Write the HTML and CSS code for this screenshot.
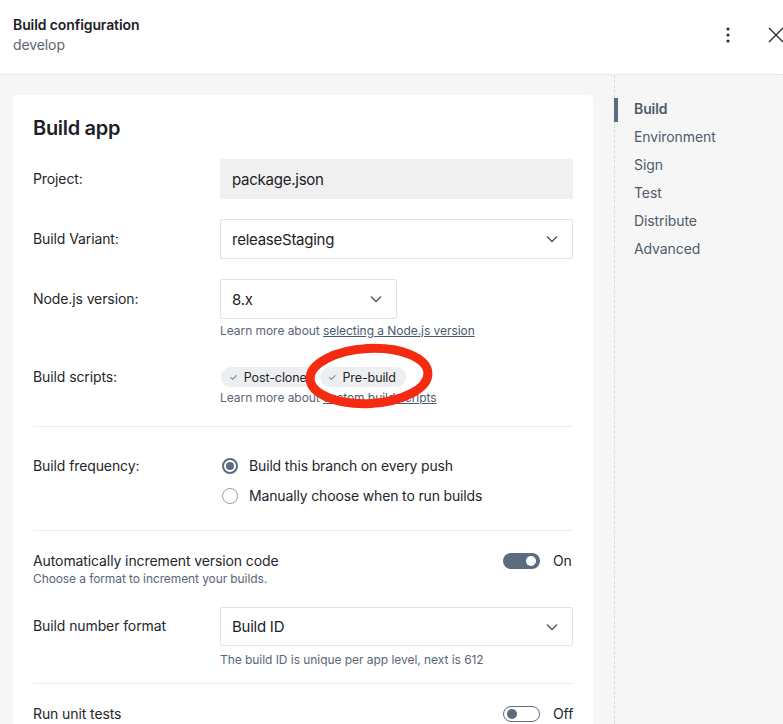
FILE: index.html
```html
<!DOCTYPE html>
<html>
<head>
<meta charset="utf-8">
<link rel="stylesheet" href="styles.css">
</head>
<body>
<header class="topbar">
  <div class="titles">
    <div class="title">Build configuration</div>
    <div class="subtitle">develop</div>
  </div>
  <div class="actions">
    <svg class="kebab" width="4" height="16" viewBox="0 0 4 16"><circle cx="2" cy="2" r="1.6"/><circle cx="2" cy="8" r="1.6"/><circle cx="2" cy="14" r="1.6"/></svg>
    <svg class="close" width="16" height="16" viewBox="0 0 16 16"><path d="M1 1L15 15M15 1L1 15"/></svg>
  </div>
</header>
<div class="layout">
  <main class="main">
    <section class="card">
      <h2 class="card-title">Build app</h2>

      <div class="row r-project">
        <div class="label">Project:</div>
        <div class="field"><div class="input readonly">package.json</div></div>
      </div>

      <div class="row r-variant">
        <div class="label">Build Variant:</div>
        <div class="field"><div class="input select">releaseStaging<svg class="chev" width="12" height="8" viewBox="0 0 12 8"><path d="M1 1.5L6 6.5L11 1.5"/></svg></div></div>
      </div>

      <div class="row r-node top">
        <div class="label lbl-input">Node.js version:</div>
        <div class="field">
          <div class="input select small">8.x<svg class="chev" width="12" height="8" viewBox="0 0 12 8"><path d="M1 1.5L6 6.5L11 1.5"/></svg></div>
          <div class="help">Learn more about <a>selecting a Node.js version</a></div>
        </div>
      </div>

      <div class="row r-scripts top">
        <div class="label lbl-chips">Build scripts:</div>
        <div class="field">
          <div class="chips">
            <span class="chip"><span class="tick">✓</span>Post-clone</span>
            <span class="chip"><span class="tick">✓</span>Pre-build</span>
          </div>
          <div class="help">Learn more about <a>custom build scripts</a></div>
        </div>
      </div>

      <div class="divider"></div>

      <div class="row r-freq top">
        <div class="label lbl-radio">Build frequency:</div>
        <div class="field radios">
          <div class="radio-row"><span class="radio checked"></span>Build this branch on every push</div>
          <div class="radio-row"><span class="radio"></span>Manually choose when to run builds</div>
        </div>
      </div>

      <div class="divider d2"></div>

      <div class="row r-auto top">
        <div class="stack">
          <div class="label wide">Automatically increment version code</div>
          <div class="sub">Choose a format to increment your builds.</div>
        </div>
        <div class="toggle-group">
          <span class="toggle on"><span class="knob"></span></span>
          <span class="toggle-label">On</span>
        </div>
      </div>

      <div class="row r-format top">
        <div class="label lbl-input">Build number format</div>
        <div class="field">
          <div class="input select">Build ID<svg class="chev" width="12" height="8" viewBox="0 0 12 8"><path d="M1 1.5L6 6.5L11 1.5"/></svg></div>
          <div class="help h2">The build ID is unique per app level, next is 612</div>
        </div>
      </div>

      <div class="divider d3"></div>

      <div class="row r-tests">
        <div class="label grow">Run unit tests</div>
        <div class="toggle-group">
          <span class="toggle off"><span class="knob"></span></span>
          <span class="toggle-label">Off</span>
        </div>
      </div>
    </section>
  </main>
  <nav class="sidenav">
    <div class="nav-item active">Build</div>
    <div class="nav-item">Environment</div>
    <div class="nav-item">Sign</div>
    <div class="nav-item">Test</div>
    <div class="nav-item">Distribute</div>
    <div class="nav-item">Advanced</div>
  </nav>
</div>
<svg class="annotation" width="150" height="90" viewBox="0 0 150 90">
  <ellipse cx="75" cy="45" rx="59" ry="27.5" transform="rotate(-3 75 45)"/>
</svg>
</body>
</html>
```

FILE: styles.css
```css
* { box-sizing: border-box; }
html, body { margin: 0; padding: 0; }
body {
  width: 783px;
  height: 724px;
  overflow: hidden;
  font-family: Inter, "Noto Sans", sans-serif;
  color: #23272b;
  background: #f6f6f6;
  position: relative;
  letter-spacing: -0.1px;
}
.topbar {
  height: 75px;
  background: #fff;
  border-bottom: 1px dotted #d6d6d6;
  display: flex;
  justify-content: space-between;
  padding: 15px 0 0 13px;
}
.title { font-size: 14px; font-weight: 600; line-height: 20px; letter-spacing: -0.1px; color: #1d2124; }
.subtitle { font-size: 14px; line-height: 20px; color: #5a6676; margin-top: 0px; }
.actions { display: flex; align-items: center; height: 40px; }
.kebab { fill: #2a2d31; margin-right: 38px; }
.close { stroke: #2a2d31; stroke-width: 1.4; fill: none; margin-right: -1px; }

.layout { display: flex; height: 649px; }
.main { width: 614px; padding: 20px 21px 0 13px; }
.card {
  background: #fff;
  border-radius: 5px;
  padding: 20px 20px 0 20px;
  height: 640px;
}
.card-title { margin: 0; font-size: 20px; font-weight: 600; line-height: 26px; letter-spacing: -0.3px; color: #1d2124; }

.row { display: flex; align-items: center; }
.row.top { align-items: flex-start; }
.label { width: 187px; flex: none; font-size: 14px; line-height: 20px; color: #23272b; }
.label.wide { width: auto; }
.label.grow { width: auto; flex: 1; }
.field { flex: 1; }

.r-project { margin-top: 18px; }
.r-variant { margin-top: 20px; }
.r-node { margin-top: 20px; }
.r-scripts { margin-top: 28px; }
.lbl-input { padding-top: 10px; }
.lbl-chips { padding-top: 0; }
.lbl-radio { padding-top: 0; }

.input {
  height: 40px;
  display: flex;
  align-items: center;
  padding: 0 12px 0 11px;
  font-size: 15px;
  letter-spacing: -0.25px;
  color: #1d2124;
  border: 1px solid #e2e2e2;
  border-radius: 2px;
}
.input.readonly { background: #f0f0f0; border-color: #f0f0f0; }
.input.select { justify-content: space-between; }
.input.small { width: 177px; }
.chev { stroke: #4a5568; stroke-width: 1.3; fill: none; margin-right: 2px; }

.help { font-size: 12px; line-height: 16px; color: #5a6676; margin-top: 4px; letter-spacing: -0.05px; }
.help a { color: #4a5a70; text-decoration: underline; }
.help.h2 { margin-top: 6px; }

.chips { display: flex; gap: 3px; height: 20px; padding-left: 1px; }
.chip {
  display: inline-flex;
  align-items: center;
  height: 20px;
  padding: 0 10px 0 8px;
  border-radius: 10px;
  background: #eceeef;
  font-size: 12.5px;
  color: #23272b;
}
.tick { font-size: 10px; color: #6b7480; margin-right: 6px; }
.r-scripts .help { margin-top: 3px; }

.divider { height: 1px; background: #ececec; margin-top: 20px; }
.r-freq { margin-top: 29px; }
.radios { display: flex; flex-direction: column; gap: 10px; }
.radio-row { display: flex; align-items: center; font-size: 14px; line-height: 20px; padding-left: 2px; letter-spacing: -0.15px; }
.radio {
  width: 16px; height: 16px; border-radius: 50%;
  border: 1px solid #9aa1a9;
  margin-right: 11px;
  position: relative;
  flex: none;
}
.radio.checked { border: 2px solid #5b6b80; }
.radio.checked::after {
  content: "";
  position: absolute;
  left: 2px; top: 2px;
  width: 8px; height: 8px; border-radius: 50%;
  background: #5b6b80;
}
.divider.d2 { margin-top: 24px; }

.r-auto { margin-top: 20px; }
.stack { flex: 1; }
.sub { font-size: 12px; line-height: 16px; color: #5a6676; margin-top: 0; }
.toggle-group { display: flex; align-items: center; width: 70px; flex: none; }
.r-auto .toggle-group { margin-top: 0; }
.toggle {
  width: 37px; height: 16px; border-radius: 8px;
  position: relative; flex: none;
  margin-right: 13px;
}
.toggle.on { background: #5b6b80; }
.toggle.on .knob { position: absolute; right: 4px; top: 3px; width: 10px; height: 10px; border-radius: 50%; background: #fff; }
.toggle.off { border: 1px solid #5b6b80; background: #fff; }
.toggle.off .knob { position: absolute; left: 3px; top: 2px; width: 10px; height: 10px; border-radius: 50%; background: #5b6b80; }
.toggle-label { font-size: 14px; line-height: 20px; color: #23272b; }

.r-format { margin-top: 20px; }
.r-format .input { height: 39px; }
.r-format .lbl-input { padding-top: 9px; }
.divider.d3 { margin-top: 15px; }
.r-tests { margin-top: 20px; }

.sidenav { flex: 1; border-left: 1px dashed #dcdcdc; padding-top: 20px; }
.nav-item {
  font-size: 14px; line-height: 28px; color: #4f5b6d;
  padding-left: 19px; position: relative;
}
.nav-item.active { font-weight: 600; }
.nav-item.active::before {
  content: "";
  position: absolute; left: -1px; top: 3px;
  width: 4px; height: 24px; background: #5b6b80;
}

.annotation {
  position: absolute;
  left: 294px; top: 331px;
  fill: none;
  stroke: #f42b10;
  stroke-width: 9;
}
```
